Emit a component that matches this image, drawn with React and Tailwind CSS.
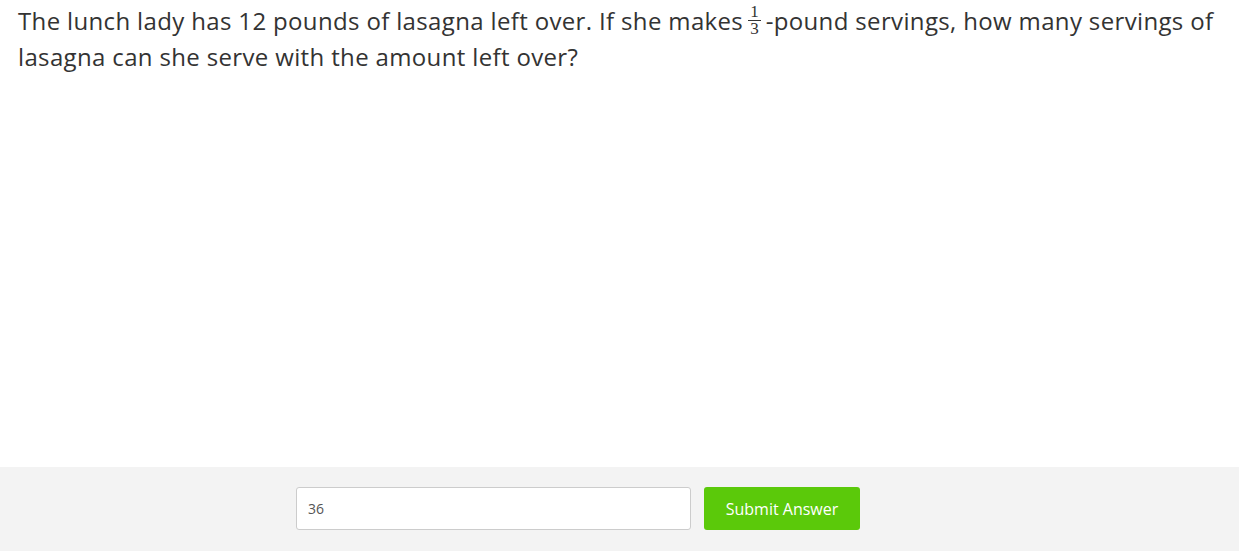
import React from 'react';

const Fraction = ({ num, den }) => (
  <span className="inline-flex flex-col items-center align-middle mx-[5px] font-['Liberation_Serif',serif] text-[17px] leading-[14px] tracking-normal relative -top-[3px] text-[#333]">
    <span className="px-[2px]">{num}</span>
    <span className="w-full border-t border-[#333] my-[1px]" />
    <span className="px-[2px]">{den}</span>
  </span>
);

const App = () => {
  return (
    <div className="w-[1239px] h-[551px] flex flex-col bg-white font-['Open_Sans',sans-serif]">
      <div className="flex-1 px-[18px] pt-[3px]">
        <p className="text-[24px] leading-[36px] tracking-[0.35px] text-[#333]">
          The lunch lady has 12 pounds of lasagna left over. If she makes
          <Fraction num="1" den="3" />
          -pound servings, how many servings of lasagna can she serve with the amount left over?
        </p>
      </div>
      <div className="h-[84px] bg-[#f3f3f3] flex justify-center items-start pt-[20px]">
        <div className="w-[647px] flex gap-[13px]">
          <input
            type="text"
            defaultValue="36"
            className="w-[395px] h-[43px] bg-white border border-[#ccc] rounded-[3px] px-[11px] text-[14px] text-[#555] focus:outline-none"
          />
          <button className="w-[156px] h-[43px] bg-[#5bc90a] text-white text-[16px] rounded-[3px]">
            Submit Answer
          </button>
        </div>
      </div>
    </div>
  );
};

export default App;
